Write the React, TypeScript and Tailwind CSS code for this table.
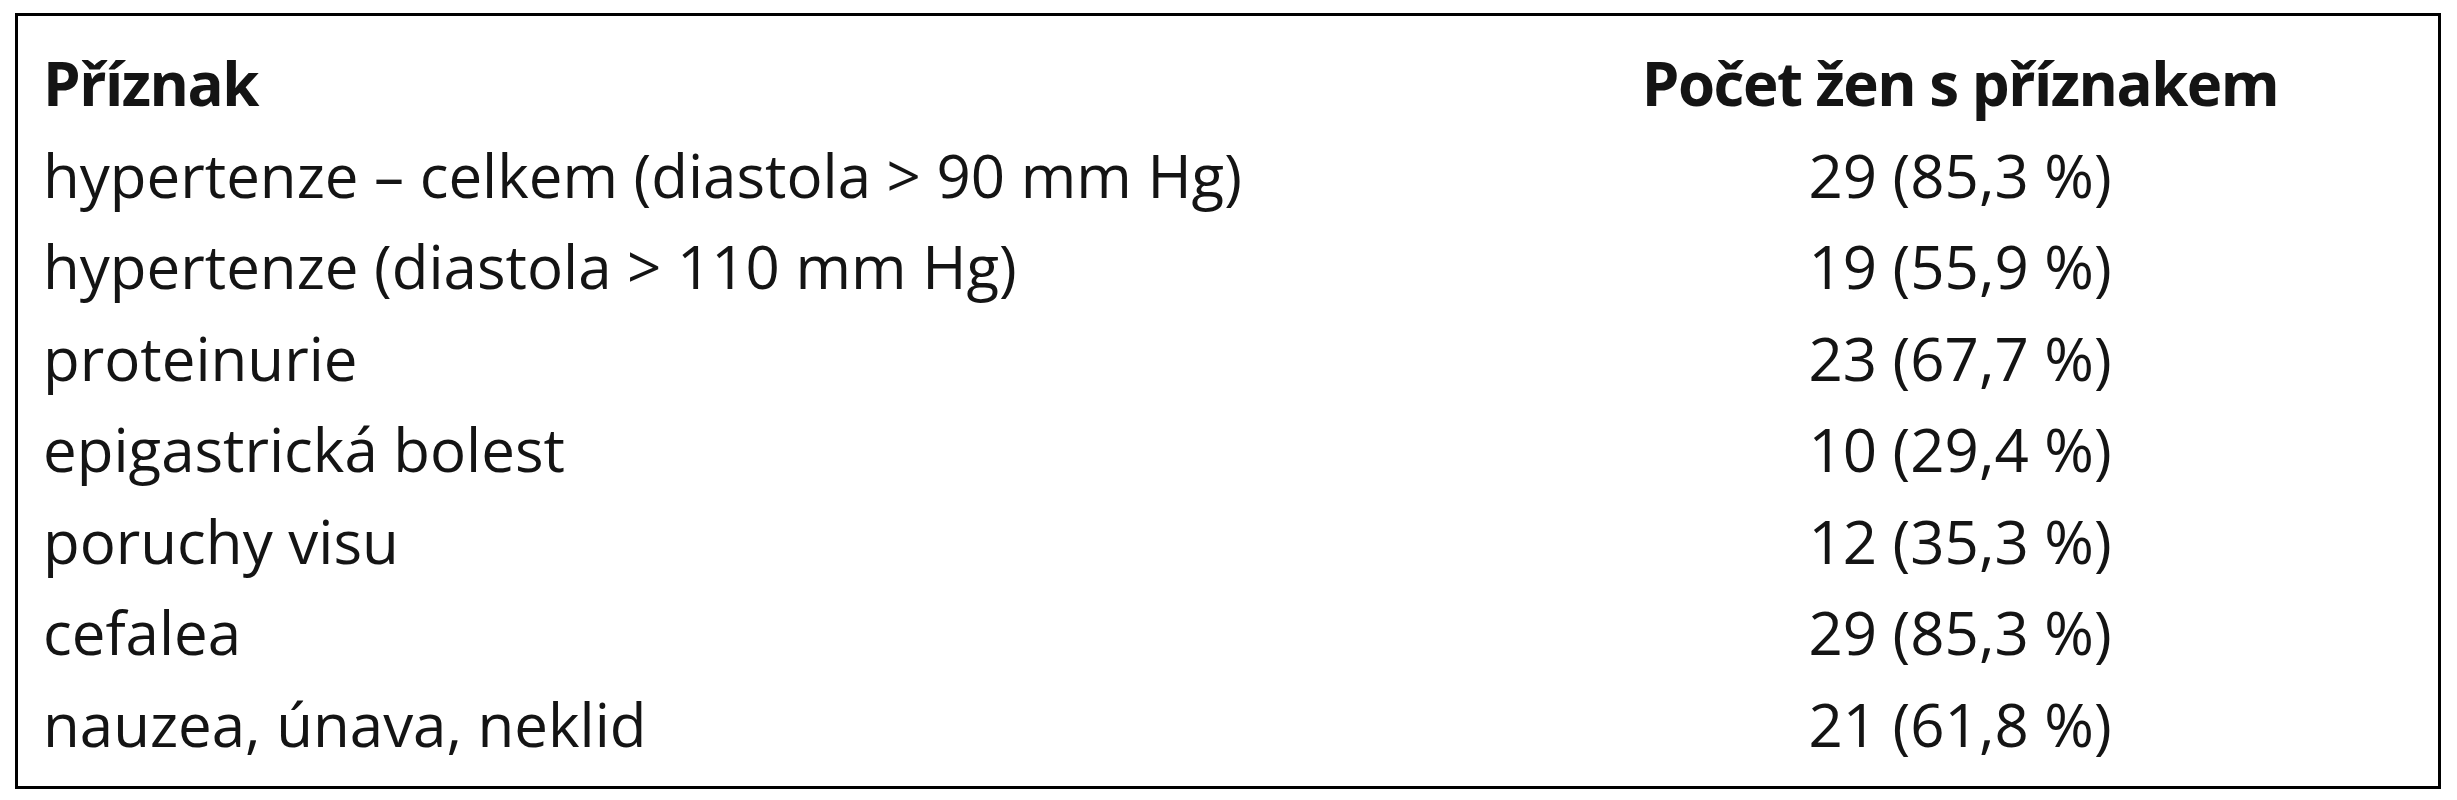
const ROWS: [string, string][] = [
  ['hypertenze – celkem (diastola > 90 mm Hg)', '29 (85,3 %)'],
  ['hypertenze (diastola > 110 mm Hg)', '19 (55,9 %)'],
  ['proteinurie', '23 (67,7 %)'],
  ['epigastrická bolest', '10 (29,4 %)'],
  ['poruchy visu', '12 (35,3 %)'],
  ['cefalea', '29 (85,3 %)'],
  ['nauzea, únava, neklid', '21 (61,8 %)'],
];

export default function App() {
  return (
    <div className="min-h-screen bg-white pt-[13px] pl-[15px] font-['Open_Sans','Noto_Sans',sans-serif] text-[#141414]">
      <div className="w-[2426px] border-[3px] border-black pt-[22px] pb-[16px] pl-[25px]">
        <div className="grid grid-cols-[1439px_1fr] text-[60px] leading-[91.5px]">
          <div className="font-bold tracking-[-1.5px]">Příznak</div>
          <div className="text-center font-bold tracking-[-1.5px]">Počet žen s příznakem</div>
          {ROWS.map(([label, value]) => (
            <div key={label} className="contents">
              <div className="whitespace-nowrap">{label}</div>
              <div className="text-center whitespace-nowrap">{value}</div>
            </div>
          ))}
        </div>
      </div>
    </div>
  );
}
